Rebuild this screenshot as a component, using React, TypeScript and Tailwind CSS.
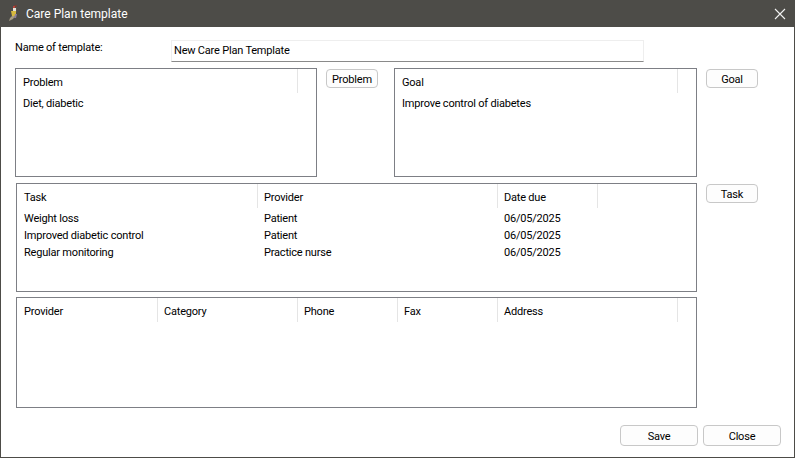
const font = { fontFamily: '"Roboto", "Liberation Sans", sans-serif' };

function Btn({ label, className }: { label: string; className: string }) {
  return (
    <button className={`border border-[#c8c8c8] rounded-[4px] bg-[#fdfdfd] text-[11px] tracking-[-0.2px] text-black leading-none pt-[1px] shrink-0 ${className}`}>
      {label}
    </button>
  );
}

function Head({ label, width, pad = "pl-[7px]" }: { label: string; width: string; pad?: string }) {
  return (
    <div className={`h-[24px] flex items-center border-r border-[#e5e5e5] shrink-0 pt-[4px] ${pad} ${width}`}>
      {label}
    </div>
  );
}

function Cells({ rows, widths }: { rows: string[][]; widths: string[] }) {
  return (
    <div className="pl-[7px] mt-[3px]">
      {rows.map((r) => (
        <div key={r[0]} className="flex h-[17px] items-center">
          {r.map((c, i) => (
            <div key={c + i} className={`shrink-0 ${widths[i]}`}>{c}</div>
          ))}
        </div>
      ))}
    </div>
  );
}

export default function App() {
  return (
    <div className="w-[795px] h-[458px] bg-white flex flex-col border-x border-b border-[#4d4c48] text-[11px] tracking-[-0.2px] text-black overflow-hidden" style={font}>
      <div className="h-[27px] -mx-px bg-[#4d4c48] flex items-center shrink-0 text-white text-[12px] tracking-normal">
        <svg width="12" height="18" viewBox="0 0 12 18" className="ml-[8px] -mt-[1px]">
          <path d="M6 1h3v2H6z" fill="#6e4038" />
          <path d="M5 2h2v2H5z" fill="#b8433a" />
          <path d="M5 4h3v3H5z" fill="#e6e2d8" />
          <path d="M8 3h1v5H8z" fill="#55524c" />
          <path d="M3 7h5v5H4z" fill="#d6b93f" />
          <path d="M7 10h2l-1 4H6z" fill="#8d7f9a" />
          <path d="M4 12l3 0-2 3-4 2 1-3z" fill="#a69c84" />
        </svg>
        <span className="ml-[6px]">Care Plan template</span>
        <svg width="12" height="12" viewBox="0 0 12 12" className="ml-auto mr-[9px]" stroke="#f2f2f2" strokeWidth="1.1">
          <path d="M1 1l10 10M11 1L1 11" />
        </svg>
      </div>

      <div className="flex-1 flex flex-col pl-[14px] pt-[13px]">
        <div className="flex h-[22px] shrink-0">
          <div className="w-[156px] shrink-0">Name of template:</div>
          <div className="w-[473px] h-[22px] border border-[#eeeeee] border-b-[#8a8a8a] flex items-center pl-[2px]">New Care Plan Template</div>
        </div>

        <div className="flex mt-[6px] shrink-0 items-start">
          <div className="w-[302px] h-[109px] border border-[#7d7f85] shrink-0">
            <div className="flex">
              <Head label="Problem" width="w-[282px]" />
            </div>
            <Cells rows={[["Diet, diabetic"]]} widths={["w-[200px]"]} />
          </div>
          <Btn label="Problem" className="w-[52px] h-[19px] ml-[9px] mt-[1px]" />
          <div className="w-[303px] h-[109px] border border-[#7d7f85] ml-[16px] shrink-0">
            <div className="flex">
              <Head label="Goal" width="w-[283px]" />
            </div>
            <Cells rows={[["Improve control of diabetes"]]} widths={["w-[250px]"]} />
          </div>
          <Btn label="Goal" className="w-[52px] h-[19px] ml-[9px] mt-[1px]" />
        </div>

        <div className="flex mt-[6px] ml-px shrink-0 items-start">
          <div className="w-[681px] h-[109px] border border-[#7d7f85] shrink-0">
            <div className="flex">
              <Head label="Task" width="w-[241px]" />
              <Head label="Provider" width="w-[240px]" pad="pl-[6px]" />
              <Head label="Date due" width="w-[100px]" pad="pl-[6px]" />
            </div>
            <Cells
              rows={[
                ["Weight loss", "Patient", "06/05/2025"],
                ["Improved diabetic control", "Patient", "06/05/2025"],
                ["Regular monitoring", "Practice nurse", "06/05/2025"],
              ]}
              widths={["w-[240px]", "w-[240px]", "w-[100px]"]}
            />
          </div>
          <Btn label="Task" className="w-[52px] h-[19px] ml-[9px] mt-[1px]" />
        </div>

        <div className="w-[681px] h-[111px] border border-[#7d7f85] mt-[5px] ml-px shrink-0">
          <div className="flex">
            <Head label="Provider" width="w-[141px]" />
            <Head label="Category" width="w-[140px]" pad="pl-[6px]" />
            <Head label="Phone" width="w-[100px]" pad="pl-[6px]" />
            <Head label="Fax" width="w-[100px]" pad="pl-[6px]" />
            <Head label="Address" width="w-[180px]" pad="pl-[6px]" />
          </div>
        </div>

        <div className="flex mt-[17px] ml-[605px] gap-[5px]">
          <Btn label="Save" className="w-[78px] h-[21px]" />
          <Btn label="Close" className="w-[78px] h-[21px]" />
        </div>
      </div>
    </div>
  );
}
